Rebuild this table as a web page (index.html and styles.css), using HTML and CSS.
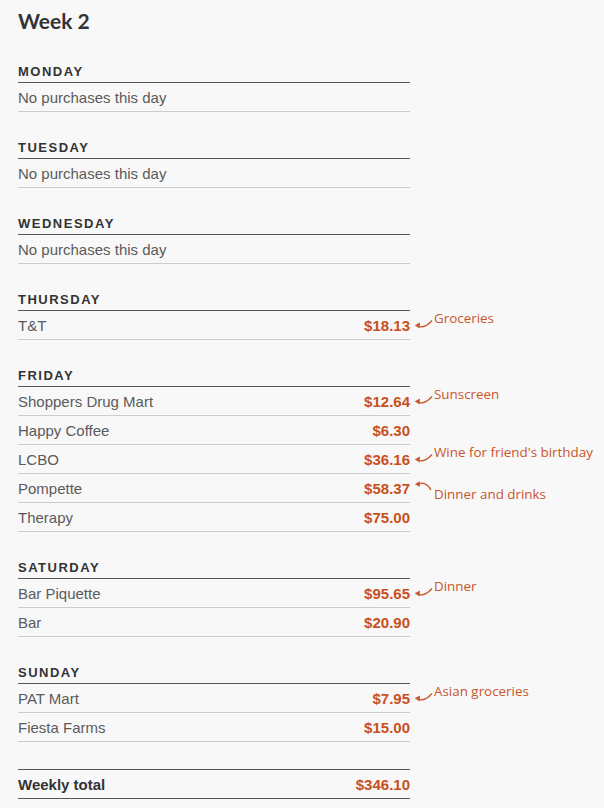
FILE: index.html
```html
<!DOCTYPE html>
<html>
<head>
<meta charset="utf-8">
<link rel="stylesheet" href="styles.css">
</head>
<body>
<main class="page">
  <h1 class="title">Week 2</h1>

  <section class="day">
    <h2 class="day-name">MONDAY</h2>
    <div class="row"><span class="empty">No purchases this day</span></div>
  </section>

  <section class="day">
    <h2 class="day-name">TUESDAY</h2>
    <div class="row"><span class="empty">No purchases this day</span></div>
  </section>

  <section class="day">
    <h2 class="day-name">WEDNESDAY</h2>
    <div class="row"><span class="empty">No purchases this day</span></div>
  </section>

  <section class="day">
    <h2 class="day-name">THURSDAY</h2>
    <div class="row"><span class="place">T&amp;T</span><span class="amount">$18.13</span>
      <span class="note note-up"><svg class="arrow" width="20" height="12" viewBox="0 0 20 12"><path d="M4 8.5 Q11 10.5 18 2.5" fill="none" stroke="#c9552b" stroke-width="1.3"/><path d="M0.8 7.3 L6 4.6 L5.6 10.4 Z" fill="#c9552b"/></svg><span class="note-text">Groceries</span></span>
    </div>
  </section>

  <section class="day">
    <h2 class="day-name">FRIDAY</h2>
    <div class="row"><span class="place">Shoppers Drug Mart</span><span class="amount">$12.64</span>
      <span class="note note-up"><svg class="arrow" width="20" height="12" viewBox="0 0 20 12"><path d="M4 8.5 Q11 10.5 18 2.5" fill="none" stroke="#c9552b" stroke-width="1.3"/><path d="M0.8 7.3 L6 4.6 L5.6 10.4 Z" fill="#c9552b"/></svg><span class="note-text">Sunscreen</span></span>
    </div>
    <div class="row"><span class="place">Happy Coffee</span><span class="amount">$6.30</span></div>
    <div class="row"><span class="place">LCBO</span><span class="amount">$36.16</span>
      <span class="note note-up"><svg class="arrow" width="20" height="12" viewBox="0 0 20 12"><path d="M4 8.5 Q11 10.5 18 2.5" fill="none" stroke="#c9552b" stroke-width="1.3"/><path d="M0.8 7.3 L6 4.6 L5.6 10.4 Z" fill="#c9552b"/></svg><span class="note-text">Wine for friend's birthday</span></span>
    </div>
    <div class="row"><span class="place">Pompette</span><span class="amount">$58.37</span>
      <span class="note note-down"><svg class="arrow" width="20" height="14" viewBox="0 0 20 14"><path d="M4 5.8 Q12 3 17 12" fill="none" stroke="#c9552b" stroke-width="1.3"/><path d="M0.8 6.2 L5.6 3.2 L6 8.8 Z" fill="#c9552b"/></svg><span class="note-text">Dinner and drinks</span></span>
    </div>
    <div class="row"><span class="place">Therapy</span><span class="amount">$75.00</span></div>
  </section>

  <section class="day">
    <h2 class="day-name">SATURDAY</h2>
    <div class="row"><span class="place">Bar Piquette</span><span class="amount">$95.65</span>
      <span class="note note-up"><svg class="arrow" width="20" height="12" viewBox="0 0 20 12"><path d="M4 8.5 Q11 10.5 18 2.5" fill="none" stroke="#c9552b" stroke-width="1.3"/><path d="M0.8 7.3 L6 4.6 L5.6 10.4 Z" fill="#c9552b"/></svg><span class="note-text">Dinner</span></span>
    </div>
    <div class="row"><span class="place">Bar</span><span class="amount">$20.90</span></div>
  </section>

  <section class="day">
    <h2 class="day-name">SUNDAY</h2>
    <div class="row"><span class="place">PAT Mart</span><span class="amount">$7.95</span>
      <span class="note note-up"><svg class="arrow" width="20" height="12" viewBox="0 0 20 12"><path d="M4 8.5 Q11 10.5 18 2.5" fill="none" stroke="#c9552b" stroke-width="1.3"/><path d="M0.8 7.3 L6 4.6 L5.6 10.4 Z" fill="#c9552b"/></svg><span class="note-text">Asian groceries</span></span>
    </div>
    <div class="row"><span class="place">Fiesta Farms</span><span class="amount">$15.00</span></div>
  </section>

  <div class="total">
    <span class="total-label">Weekly total</span>
    <span class="amount">$346.10</span>
  </div>
</main>
</body>
</html>
```

FILE: styles.css
```css
html, body {
  margin: 0;
  padding: 0;
  background: #f8f8f8;
}

.page {
  width: 392px;
  padding: 7px 0 0 18px;
  font-family: "Liberation Sans", Arial, sans-serif;
}

.title {
  margin: 0 0 28px;
  font-family: "Lato", "Open Sans", sans-serif;
  font-weight: 700;
  font-size: 21px;
  line-height: 28px;
  color: #333;
}

.day {
  margin-bottom: 27px;
}

.day-name {
  margin: 0;
  padding: 1px 0 2px;
  border-bottom: 1px solid #555;
  font-size: 13px;
  line-height: 16px;
  font-weight: 700;
  letter-spacing: 1.5px;
  color: #333;
}

.row {
  position: relative;
  display: flex;
  justify-content: space-between;
  align-items: center;
  height: 28px;
  border-bottom: 1px solid #cccccc;
  font-size: 15px;
}

.empty, .place {
  color: #5b5b5b;
}

.amount {
  font-weight: 700;
  color: #c9501c;
  font-size: 15px;
}

.note {
  position: absolute;
  left: 100%;
  display: flex;
  align-items: flex-start;
  white-space: nowrap;
  font-family: "Open Sans", "Noto Sans", sans-serif;
  font-size: 13.4px;
  line-height: 16px;
  color: #c9552b;
}

.arrow {
  flex: none;
  margin-left: 4px;
}

.note-up {
  top: -1px;
}

.note-up .arrow {
  margin-top: 8px;
}

.note-down {
  top: 4px;
}

.note-down .note-text {
  margin-top: 8px;
}

.total {
  display: flex;
  justify-content: space-between;
  align-items: center;
  height: 28px;
  margin-top: 3px;
  border-top: 1px solid #555;
  border-bottom: 1px solid #555;
  font-size: 15px;
}

.total-label {
  font-weight: 700;
  color: #333;
}
```
